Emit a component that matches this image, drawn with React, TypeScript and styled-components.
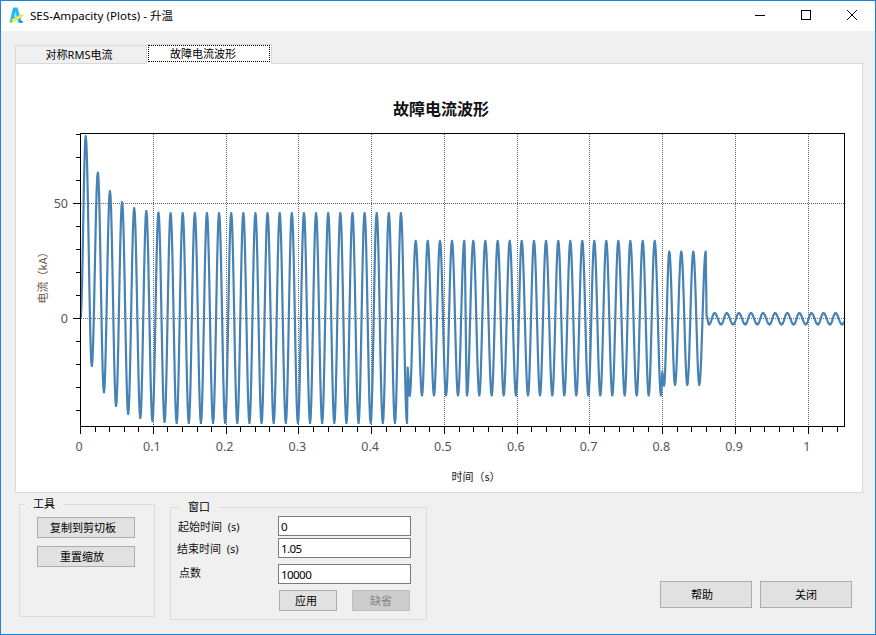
import React from "react";
import styled, { createGlobalStyle } from "styled-components";

const GlobalStyle = createGlobalStyle`
  html, body {
    margin: 0;
    padding: 0;
    background: #f0f0f0;
  }
  * {
    box-sizing: border-box;
  }
`;

const UI_FONT = `"Noto Sans", "Noto Sans CJK SC", sans-serif`;
const CJK_FONT = `"Noto Sans CJK SC", "Noto Sans", sans-serif`;

const Window = styled.div`
  width: 876px;
  height: 635px;
  display: flex;
  flex-direction: column;
  border: 1px solid #1883d7;
  background: #f0f0f0;
  color: #000;
  font-family: ${UI_FONT};
  font-size: 11px;
  overflow: hidden;
`;

const TitleBar = styled.div`
  height: 30px;
  flex: none;
  display: flex;
  align-items: center;
  padding: 0 0 2px 8px;
  background: #fff;
`;

const TitleText = styled.span`
  margin-left: 5px;
  font-size: 11.6px;
  white-space: pre;
`;

const WindowControls = styled.div`
  margin-left: auto;
  display: flex;
`;

const ControlButton = styled.div`
  width: 46px;
  height: 28px;
  display: flex;
  align-items: center;
  justify-content: center;
`;

const TabStrip = styled.div`
  flex: none;
  height: 19px;
  margin: 13px 0 0 14px;
  display: flex;
  align-items: flex-end;
`;

const Tab = styled.div<{ $active?: boolean }>`
  position: relative;
  display: flex;
  align-items: stretch;
  border-top: 1px solid #d9d9d9;
  border-left: 1px solid #d9d9d9;
  border-right: ${(p) => (p.$active ? "1px solid #d9d9d9" : "none")};
  background: ${(p) => (p.$active ? "#fff" : "#f0f0f0")};
  width: ${(p) => (p.$active ? "126px" : "131px")};
  height: ${(p) => (p.$active ? "20px" : "18px")};
  margin-bottom: ${(p) => (p.$active ? "-1px" : "0")};
  padding: ${(p) => (p.$active ? "0 1px 2px 1px" : "0 4px 0 0")};
  z-index: ${(p) => (p.$active ? 1 : 0)};
`;

const TabLabel = styled.span<{ $focused?: boolean }>`
  flex: 1;
  display: flex;
  align-items: center;
  justify-content: center;
  line-height: 1;
  padding-right: ${(p) => (p.$focused ? "12px" : "0")};
  border: ${(p) => (p.$focused ? "1px dotted #000" : "none")};
`;

const Panel = styled.div`
  flex: none;
  width: 848px;
  height: 430px;
  margin-left: 14px;
  border: 1px solid #d9d9d9;
  background: #fff;
`;

const ChartSvg = styled.svg`
  display: block;
  width: 846px;
  height: 428px;
`;

const BottomRow = styled.div`
  flex: 1;
  display: flex;
  align-items: flex-start;
  padding: 0 23px 0 18px;
`;

const GroupBox = styled.div<{ $top: number; $width: number; $left?: number }>`
  position: relative;
  flex: none;
  width: ${(p) => p.$width}px;
  height: 113px;
  margin-top: ${(p) => p.$top}px;
  margin-left: ${(p) => p.$left ?? 0}px;
  border: 1px solid #dcdcdc;
`;

const GroupLegend = styled.span<{ $left: number }>`
  position: absolute;
  top: -8px;
  left: ${(p) => p.$left}px;
  padding: 0 8px;
  background: #f0f0f0;
  line-height: 14px;
`;

const ToolStack = styled.div`
  display: flex;
  flex-direction: column;
  align-items: flex-start;
  gap: 8px;
  padding: 12px 0 0 17px;
`;

// $nudge: the labels in the reference sit left of the button centre
const Button = styled.button<{ $w: number; $h?: number; $disabled?: boolean; $nudge?: number }>`
  width: ${(p) => p.$w}px;
  height: ${(p) => p.$h ?? 21}px;
  padding: 0 ${(p) => p.$nudge ?? 0}px 0 0;
  border: 1px solid ${(p) => (p.$disabled ? "#bfbfbf" : "#adadad")};
  background: ${(p) => (p.$disabled ? "#cccccc" : "#e1e1e1")};
  color: ${(p) => (p.$disabled ? "#838383" : "#000")};
  font-family: ${CJK_FONT};
  font-size: 11px;
  line-height: 1;
`;

const FieldStack = styled.div`
  display: flex;
  flex-direction: column;
  padding-top: 8px;
`;

const FieldRow = styled.div<{ $top?: number }>`
  display: flex;
  align-items: center;
  height: 20px;
  margin-top: ${(p) => p.$top ?? 0}px;
`;

const FieldLabel = styled.label<{ $indent: number; $lift?: number }>`
  width: 107px;
  padding-left: ${(p) => p.$indent}px;
  padding-bottom: ${(p) => p.$lift ?? 0}px;
  white-space: pre;
  color: #111;
`;

const FieldInput = styled.input`
  width: 133px;
  height: 20px;
  padding: 0 2px;
  border: 1px solid #7a7a7a;
  background: #fff;
  color: #000;
  font-family: ${UI_FONT};
  font-size: 11.6px;
  letter-spacing: -0.6px;
  outline: none;
`;

const FieldActions = styled.div`
  display: flex;
  gap: 15px;
  margin: 6px 0 0 108px;
`;

const DialogActions = styled.div`
  margin: 88px 0 0 auto;
  display: flex;
  gap: 8px;
`;

const TickLabel = styled.text`
  font-family: ${UI_FONT};
  font-size: 12.5px;
  fill: #555;
`;

const ChartTitle = styled.text`
  font-family: ${CJK_FONT};
  font-size: 16px;
  font-weight: 700;
  fill: #111;
`;

const AxisTitle = styled.text`
  font-family: ${CJK_FONT};
  font-size: 11px;
`;

const PLOT = { left: 80.5, right: 844.5, top: 133.5, bottom: 426.5 };
const xAt = (s: number) => 80.6 + s * 727.7;
const yAt = (kA: number) => 318.3 - kA * 2.3;

type Pt = [number, number];

// every extreme of the trace, read off the reference in page pixels
function traceExtremes(): { pts: Pt[]; straight: Set<number> } {
  const pts: Pt[] = [[80.6, 318]];
  const straight = new Set<number>();
  const peaks = [136.2, 172.5, 191, 202, 208, 211, 212.5];
  const troughs = [366, 392.5, 406, 414, 418, 421, 422];
  for (let k = 0; k < 27; k++) {
    pts.push([85.7 + 12.125 * k, peaks[k] ?? 213]);
    pts.push([91.8 + 12.125 * k, troughs[k] ?? 423]);
  }
  straight.add(pts.length);
  pts.push([407.7, 367.5]);
  straight.add(pts.length);
  pts.push([409.7, 396]);

  const second = [
    415.7, 422, 427.7, 434, 440, 446, 452, 458, 464.3, 467, 473.3, 479.3, 485.3,
    491.7, 497.7, 503.7, 509.7, 516, 521.7, 528, 534, 540, 546, 552.3, 558.3,
    564.3, 570.3, 576.3, 582.3, 588.3, 594.3, 600.3, 606.3, 612.3, 618.3, 624.7,
    630.3, 636.7, 642.7, 648.7, 654.7, 661,
  ];
  second.forEach((x, i) => pts.push([x, i % 2 === 0 ? 240.8 : 395.5]));
  straight.add(pts.length);
  pts.push([662.3, 372]);
  straight.add(pts.length);
  pts.push([664, 385.7]);

  [669.3, 675, 681.3, 687.3, 693.3, 699.3, 705.7].forEach((x, i) =>
    pts.push([x, i % 2 === 0 ? 251.5 : 385])
  );
  straight.add(pts.length);
  pts.push([706.6, 316]);

  for (let k = 0; k < 12; k++) {
    pts.push([709 + 12.1 * k, 324.6]);
    if (k < 11) pts.push([714.6 + 12.1 * k, 313]);
  }
  pts.push([844.3, 322]);
  return { pts, straight };
}

function tracePath() {
  const { pts, straight } = traceExtremes();
  let d = `M${pts[0][0]} ${pts[0][1]}`;
  for (let i = 1; i < pts.length; i++) {
    const [x0, y0] = pts[i - 1];
    const [x1, y1] = pts[i];
    if (straight.has(i)) {
      d += `L${x1} ${y1}`;
      continue;
    }
    for (let s = 1; s <= 10; s++) {
      const u = s / 10;
      const y = y0 + ((y1 - y0) * (1 - Math.cos(Math.PI * u))) / 2;
      d += `L${(x0 + (x1 - x0) * u).toFixed(2)} ${y.toFixed(2)}`;
    }
  }
  return d;
}

const majorX = [0, 0.1, 0.2, 0.3, 0.4, 0.5, 0.6, 0.7, 0.8, 0.9, 1];
const minorX = Array.from({ length: 53 }, (_, i) => i * 0.02).filter(
  (v) => v <= 1.05 && Math.round(v * 50) % 5 !== 0
);
const minorY = [80, 70, 60, 40, 30, 20, 10, -10, -20, -30, -40];

function Chart() {
  const snap = (v: number) => Math.round(v - 0.5) + 0.5;
  return (
    <ChartSvg viewBox="16 64 846 428">
      <ChartTitle x={441} y={115} textAnchor="middle">
        故障电流波形
      </ChartTitle>

      <g stroke="#666" strokeWidth={1} strokeDasharray="1 1" shapeRendering="crispEdges">
        {majorX.slice(1).map((v) => (
          <line key={v} x1={snap(xAt(v))} x2={snap(xAt(v))} y1={PLOT.top} y2={PLOT.bottom} />
        ))}
        {[50, 0].map((v) => (
          <line key={v} x1={PLOT.left} x2={PLOT.right} y1={snap(yAt(v))} y2={snap(yAt(v))} />
        ))}
      </g>

      <path d={tracePath()} fill="none" stroke="#4682b4" strokeWidth={2.2} strokeLinejoin="round" />

      <g stroke="#000" strokeWidth={1} shapeRendering="crispEdges">
        <rect
          x={PLOT.left}
          y={PLOT.top}
          width={PLOT.right - PLOT.left}
          height={PLOT.bottom - PLOT.top}
          fill="none"
        />
        {majorX.map((v) => (
          <line key={v} x1={snap(xAt(v))} x2={snap(xAt(v))} y1={PLOT.bottom} y2={PLOT.bottom + 7} />
        ))}
        {minorX.map((v) => (
          <line key={v} x1={snap(xAt(v))} x2={snap(xAt(v))} y1={PLOT.bottom} y2={PLOT.bottom + 5} />
        ))}
        {[50, 0].map((v) => (
          <line key={v} x1={PLOT.left - 8} x2={PLOT.left} y1={snap(yAt(v))} y2={snap(yAt(v))} />
        ))}
        {minorY.map((v) => (
          <line key={v} x1={PLOT.left - 5} x2={PLOT.left} y1={snap(yAt(v))} y2={snap(yAt(v))} />
        ))}
      </g>

      {majorX.map((v) => (
        <TickLabel key={v} x={xAt(v) - 1.5} y={451} textAnchor="middle">
          {v}
        </TickLabel>
      ))}
      <TickLabel x={68} y={208} textAnchor="end">
        50
      </TickLabel>
      <TickLabel x={68} y={323} textAnchor="end">
        0
      </TickLabel>

      <AxisTitle x={476} y={481} textAnchor="middle" fill="#222">
        时间（s）
      </AxisTitle>
      <AxisTitle
        x={0}
        y={0}
        textAnchor="middle"
        fill="#6b5a48"
        transform="translate(47 275) rotate(-90)"
      >
        电流（kA）
      </AxisTitle>
    </ChartSvg>
  );
}

function AppIcon() {
  return (
    <svg width="16" height="17" viewBox="0 0 16 17">
      <path d="M4 0.5h4.5l4.5 15H9.2L8.6 13H5.2L4 15.5H0.5z" fill="#22bdf0" />
      <path d="M6.4 4.5 7.8 10H5z" fill="#9fe6fb" />
      <path d="M2.5 12.5 L12.5 7 L15 8.5 L6 14.5 L2.5 15.5z" fill="#f4ea3a" />
      <path d="M10 14h3.4l.6 1.8h-3.6z" fill="#1c7fd6" />
    </svg>
  );
}

export default function App() {
  return (
    <>
      <GlobalStyle />
      <Window>
        <TitleBar>
          <AppIcon />
          <TitleText>SES-Ampacity (Plots) - 升温</TitleText>
          <WindowControls>
            <ControlButton>
              <svg width="10" height="10" viewBox="0 0 10 10">
                <path d="M0 5.5h10" stroke="#000" fill="none" />
              </svg>
            </ControlButton>
            <ControlButton>
              <svg width="10" height="10" viewBox="0 0 10 10">
                <rect x="0.5" y="0.5" width="9" height="9" stroke="#000" fill="none" />
              </svg>
            </ControlButton>
            <ControlButton>
              <svg width="10" height="10" viewBox="0 0 10 10">
                <path d="M0 0l10 10M10 0L0 10" stroke="#000" fill="none" />
              </svg>
            </ControlButton>
          </WindowControls>
        </TitleBar>

        <TabStrip>
          <Tab>
            <TabLabel>对称RMS电流</TabLabel>
          </Tab>
          <Tab $active>
            <TabLabel $focused>故障电流波形</TabLabel>
          </Tab>
        </TabStrip>

        <Panel>
          <Chart />
        </Panel>

        <BottomRow>
          <GroupBox $top={11} $width={136}>
            <GroupLegend $left={5}>工具</GroupLegend>
            <ToolStack>
              <Button $w={98} $nudge={6}>
                复制到剪切板
              </Button>
              <Button $w={98} $nudge={8}>
                重置缩放
              </Button>
            </ToolStack>
          </GroupBox>

          <GroupBox $top={14} $width={257} $left={15}>
            <GroupLegend $left={9}>窗口</GroupLegend>
            <FieldStack>
              <FieldRow>
                <FieldLabel $indent={7}>起始时间  (s)</FieldLabel>
                <FieldInput readOnly value="0" />
              </FieldRow>
              <FieldRow $top={2}>
                <FieldLabel $indent={6}>结束时间  (s)</FieldLabel>
                <FieldInput readOnly value="1.05" />
              </FieldRow>
              <FieldRow $top={6}>
                <FieldLabel $indent={8} $lift={4}>
                  点数
                </FieldLabel>
                <FieldInput readOnly value="10000" />
              </FieldRow>
            </FieldStack>
            <FieldActions>
              <Button $w={58} $nudge={4}>
                应用
              </Button>
              <Button $w={58} $disabled>
                缺省
              </Button>
            </FieldActions>
          </GroupBox>

          <DialogActions>
            <Button $w={92} $h={27} $nudge={8}>
              帮助
            </Button>
            <Button $w={92} $h={27}>
              关闭
            </Button>
          </DialogActions>
        </BottomRow>
      </Window>
    </>
  );
}
